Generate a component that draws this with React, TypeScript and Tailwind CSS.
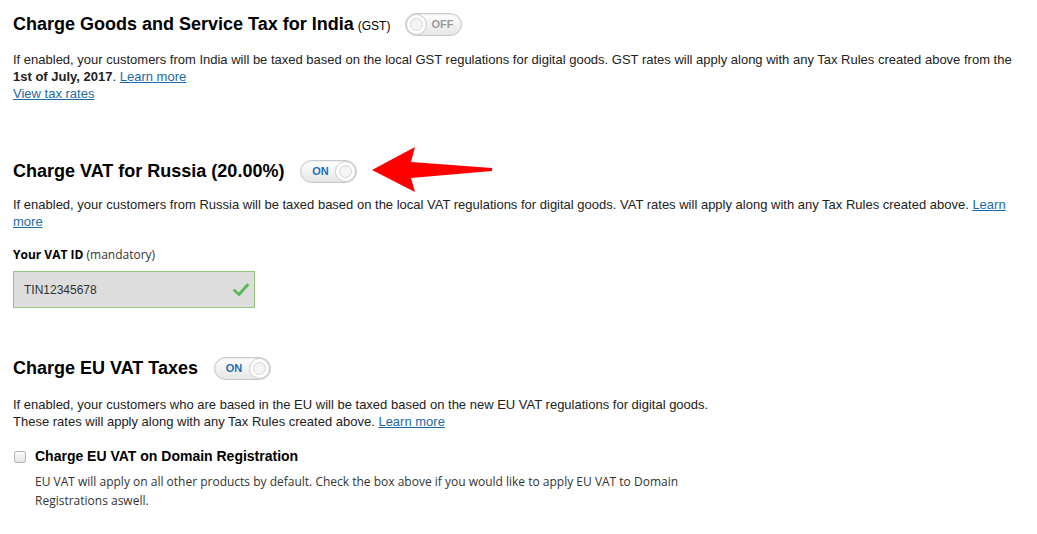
import React from "react";

const Toggle: React.FC<{ on: boolean }> = ({ on }) => (
    <div className="flex items-center w-[57px] h-[23px] rounded-full border border-[#c8c8c8] bg-gradient-to-b from-[#ffffff] to-[#e6e6e6] shadow-[inset_0_1px_2px_rgba(0,0,0,0.08)]">
        {on ? (
            <>
                <span className="flex-1 text-center text-[11px] font-bold text-[#1f6fb5] pl-[4px] leading-none">ON</span>
                <span className="w-[21px] h-[21px] rounded-full border border-[#c8c8c8] bg-white flex items-center justify-center">
                    <span className="w-[13px] h-[13px] rounded-full border border-[#d6d6d6] bg-[#f4f4f4]" />
                </span>
            </>
        ) : (
            <>
                <span className="w-[21px] h-[21px] rounded-full border border-[#c8c8c8] bg-white flex items-center justify-center">
                    <span className="w-[13px] h-[13px] rounded-full border border-[#d6d6d6] bg-[#f4f4f4]" />
                </span>
                <span className="flex-1 text-center text-[11px] font-bold text-[#9a9a9a] pr-[4px] leading-none">OFF</span>
            </>
        )}
    </div>
);

const A: React.FC<{ children: React.ReactNode }> = ({ children }) => (
    <a href="#" className="text-[#1b6aa5] underline">{children}</a>
);

const App: React.FC = () => {
    return (
        <div className="w-[1037px] h-[534px] bg-white text-[#222] font-['Liberation_Sans',Arial,sans-serif] pl-[13px] pr-[20px] pt-[12px] relative overflow-hidden">
            {/* GST */}
            <div className="flex items-center h-[25px]">
                <h2 className="text-[18px] font-bold text-black">Charge Goods and Service Tax for India</h2>
                <span className="text-[12px] ml-[4px] mt-[3px] text-black">(GST)</span>
                <div className="ml-[15px]"><Toggle on={false} /></div>
            </div>
            <p className="text-[13px] leading-[17px] mt-[14px] w-[1005px]">
                If enabled, your customers from India will be taxed based on the local GST regulations for digital goods. GST rates will apply along with any Tax Rules created above from the <b>1st of July, 2017</b>. <A>Learn more</A>
                <br />
                <A>View tax rates</A>
            </p>

            {/* Russia */}
            <div className="flex items-center h-[25px] mt-[57px] relative">
                <h2 className="text-[18px] font-bold text-black">Charge VAT for Russia (20.00%)</h2>
                <div className="ml-[16px]"><Toggle on={true} /></div>
                <svg className="absolute left-[357px] top-[-13px]" width="124" height="47" viewBox="0 0 124 47">
                    <path d="M2 24 L45 1 L41 16 L122 22 L122 25 L41 32 L45 46 Z" fill="#ff0000" />
                </svg>
            </div>
            <p className="text-[13px] leading-[17px] mt-[12px] w-[1010px]">
                If enabled, your customers from Russia will be taxed based on the local VAT regulations for digital goods. VAT rates will apply along with any Tax Rules created above. <A>Learn more</A>
            </p>
            <div className="mt-[16px] text-[12px] font-['Open_Sans',sans-serif] text-black">
                <b>Your VAT ID</b> <span className="text-[#333]">(mandatory)</span>
            </div>
            <div className="mt-[7px] w-[242px] h-[37px] bg-[#dddddd] border border-[#95c47f] flex items-center justify-between pl-[10px] pr-[5px]">
                <span className="text-[12px] text-[#333]">TIN12345678</span>
                <svg width="16" height="14" viewBox="0 0 16 14">
                    <path d="M1.5 7.5 L6 11.5 L14.5 2" stroke="#5cb85c" strokeWidth="3" fill="none" strokeLinecap="round" strokeLinejoin="round" />
                </svg>
            </div>

            {/* EU */}
            <div className="flex items-center h-[25px] mt-[48px]">
                <h2 className="text-[18px] font-bold text-black">Charge EU VAT Taxes</h2>
                <div className="ml-[16px]"><Toggle on={true} /></div>
            </div>
            <p className="text-[13px] leading-[17px] mt-[15px]">
                If enabled, your customers who are based in the EU will be taxed based on the new EU VAT regulations for digital goods.
                <br />
                These rates will apply along with any Tax Rules created above. <A>Learn more</A>
            </p>
            <div className="flex items-center mt-[16px]">
                <span className="w-[12px] h-[12px] ml-[1px] rounded-[2px] border border-[#b5b5b5] bg-gradient-to-b from-[#fafafa] to-[#e4e4e4]" />
                <span className="ml-[9px] text-[14px] font-bold text-black">Charge EU VAT on Domain Registration</span>
            </div>
            <p className="ml-[22px] mt-[5px] w-[690px] text-[12px] leading-[19px] font-['Open_Sans',sans-serif] text-[#333]">
                EU VAT will apply on all other products by default. Check the box above if you would like to apply EU VAT to Domain Registrations aswell.
            </p>
        </div>
    );
};

export default App;
